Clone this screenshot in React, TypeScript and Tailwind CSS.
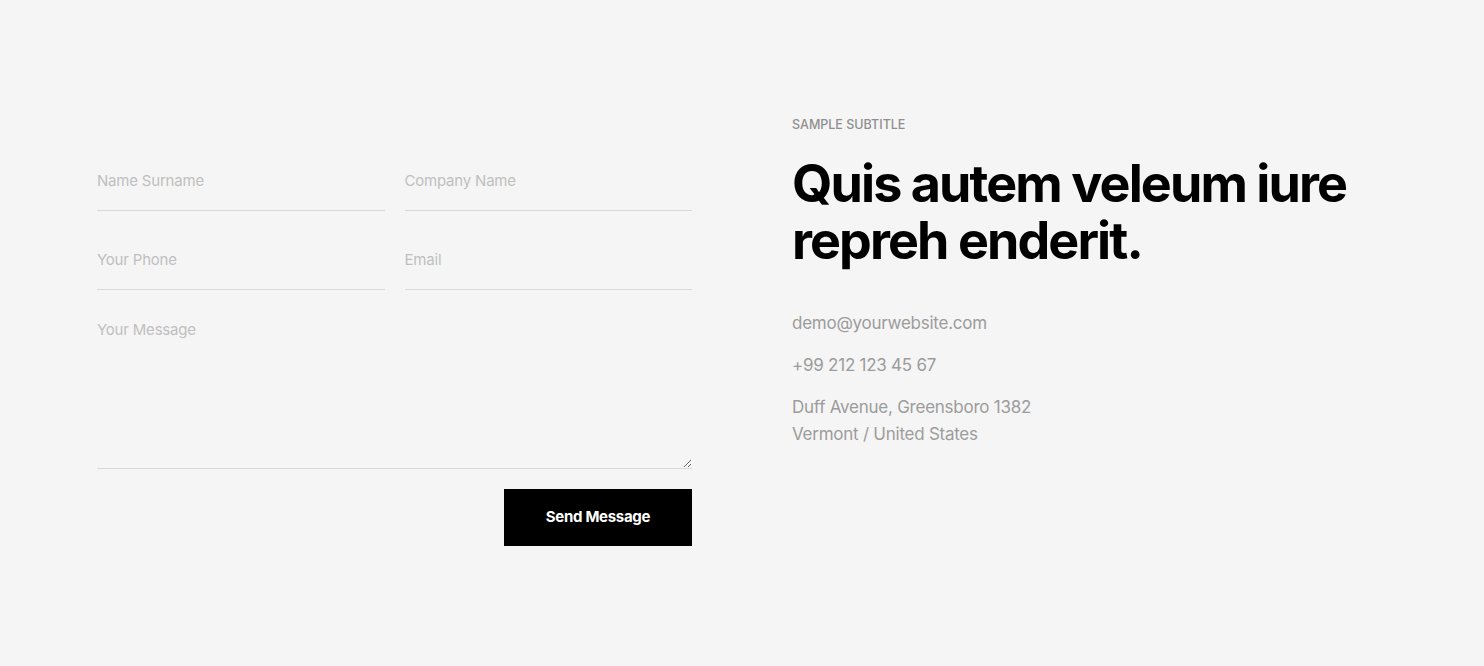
import React from "react";

export default function App() {
  const font = { fontFamily: "Inter, 'Noto Sans', sans-serif" };
  const inputCls =
    "h-[60px] w-full bg-transparent border-b border-[#d9d9d9] text-[15px] tracking-[-0.2px] text-[#333] placeholder:text-[#bfbfbf] outline-none";
  return (
    <div className="min-h-[666px] w-full bg-[#f5f5f5]" style={font}>
      <div className="grid grid-cols-2 gap-[100px] px-[97px] pt-[119px]">
        <form className="flex flex-col pt-[32px]" onSubmit={(e) => e.preventDefault()}>
          <div className="grid grid-cols-2 gap-x-[20px] gap-y-[19px]">
            <input className={inputCls} placeholder="Name Surname" />
            <input className={inputCls} placeholder="Company Name" />
            <input className={inputCls} placeholder="Your Phone" />
            <input className={inputCls} placeholder="Email" />
          </div>
          <textarea
            className="mt-[19px] h-[160px] w-full bg-transparent border-b border-[#d9d9d9] pt-[10px] text-[15px] tracking-[-0.2px] text-[#333] placeholder:text-[#bfbfbf] outline-none"
            placeholder="Your Message"
          />
          <div className="mt-[20px] flex justify-end">
            <button className="h-[57px] w-[188px] bg-black text-[15px] font-bold tracking-[-0.3px] text-white">
              Send Message
            </button>
          </div>
        </form>
        <div className="flex flex-col">
          <div className="text-[12.5px] font-medium uppercase leading-[12px] text-[#8f8f8f]">
            Sample Subtitle
          </div>
          <h1 className="mt-[24px] text-[52px] font-bold leading-[57px] tracking-[-1.9px] text-black">
            Quis autem veleum iure
            <br />
            repreh enderit.
          </h1>
          <div className="mt-[41px] flex flex-col gap-[15px] text-[17px] leading-[27px] tracking-[-0.25px] text-[#9c9c9c]">
            <div>demo@yourwebsite.com</div>
            <div>+99 212 123 45 67</div>
            <div>
              Duff Avenue, Greensboro 1382
              <br />
              Vermont / United States
            </div>
          </div>
        </div>
      </div>
    </div>
  );
}
